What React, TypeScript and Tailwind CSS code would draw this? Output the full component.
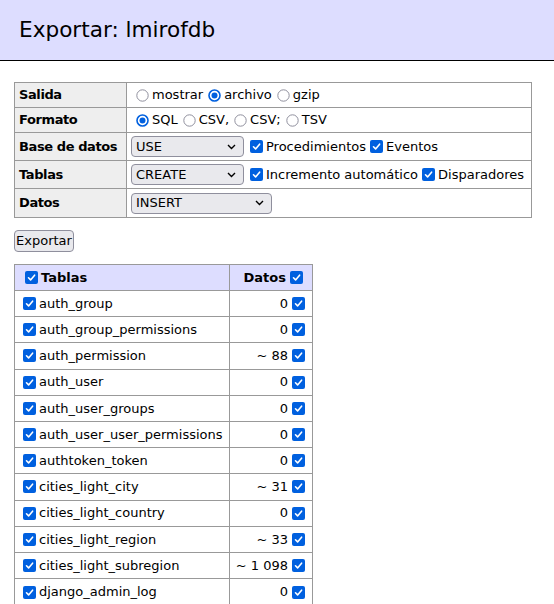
import React from "react";

const FONT = { fontFamily: "'DejaVu Sans', Verdana, sans-serif" };

function Radio({ checked }: { checked?: boolean }) {
  return (
    <svg
      width="13"
      height="13"
      viewBox="0 0 13 13"
      className="ml-[5px] mr-[3px] shrink-0"
      aria-hidden="true"
    >
      {checked ? (
        <>
          <circle cx="6.5" cy="6.5" r="5.5" fill="#fff" stroke="#0060df" strokeWidth="1.6" />
          <circle cx="6.5" cy="6.5" r="3" fill="#0060df" />
        </>
      ) : (
        <circle cx="6.5" cy="6.5" r="5.7" fill="#fff" stroke="#8f8f9d" strokeWidth="1" />
      )}
    </svg>
  );
}

function Check() {
  return (
    <span className="ml-[4px] mr-[3px] inline-flex size-[13px] shrink-0 items-center justify-center rounded-[2px] bg-[#0060df]">
      <svg width="9" height="9" viewBox="0 0 9 9" aria-hidden="true">
        <path d="M1.5 4.8 L3.6 6.9 L7.6 2.2" fill="none" stroke="#fff" strokeWidth="1.6" strokeLinecap="round" strokeLinejoin="round" />
      </svg>
    </span>
  );
}

function Select({ value, width }: { value: string; width: string }) {
  return (
    <span
      className={`inline-flex h-[21px] items-center justify-between rounded-[4px] border border-[#8f8f9d] bg-[#e9e9ed] pl-[4px] pr-[7px] text-[13px] ${width}`}
    >
      <span>{value}</span>
      <svg width="9" height="6" viewBox="0 0 9 6" aria-hidden="true">
        <path d="M1 1 L4.5 4.5 L8 1" fill="none" stroke="#000" strokeWidth="1.4" />
      </svg>
    </span>
  );
}

function OptRow({
  label,
  h,
  last,
  children,
}: {
  label: string;
  h: string;
  last?: boolean;
  children: React.ReactNode;
}) {
  return (
    <div className={`flex ${h} ${last ? "" : "border-b border-[#999]"}`}>
      <div className="flex w-[111px] shrink-0 items-center bg-[#eee] px-[4px] font-bold whitespace-nowrap tracking-[-0.4px]">
        {label}
      </div>
      <div className="flex flex-1 items-center border-l border-[#999] px-[4px] whitespace-nowrap">
        {children}
      </div>
    </div>
  );
}

const TABLES: [string, string][] = [
  ["auth_group", "0"],
  ["auth_group_permissions", "0"],
  ["auth_permission", "~ 88"],
  ["auth_user", "0"],
  ["auth_user_groups", "0"],
  ["auth_user_user_permissions", "0"],
  ["authtoken_token", "0"],
  ["cities_light_city", "~ 31"],
  ["cities_light_country", "0"],
  ["cities_light_region", "~ 33"],
  ["cities_light_subregion", "~ 1 098"],
  ["django_admin_log", "0"],
];

export default function App() {
  return (
    <div className="min-h-[604px] w-[554px] overflow-hidden bg-white text-black" style={FONT}>
      <h2 className="h-[61px] border-b border-black bg-[#ddf] pl-[19px] text-[21.6px] leading-[60px] font-normal">
        Exportar: lmirofdb
      </h2>

      <div className="ml-[14px] mt-[21px] text-[13px]">
        <div className="w-[518px] border border-[#999]">
          <OptRow label="Salida" h="h-[25px]">
            <Radio />mostrar<Radio checked />archivo<Radio />gzip
          </OptRow>
          <OptRow label="Formato" h="h-[25px]">
            <Radio checked />SQL<Radio />CSV,<Radio />CSV;<Radio />TSV
          </OptRow>
          <OptRow label="Base de datos" h="h-[28px]">
            <Select value="USE" width="w-[113px]" />
            <span className="ml-[2px]" />
            <Check />Procedimientos<Check />Eventos
          </OptRow>
          <OptRow label="Tablas" h="h-[28px]">
            <Select value="CREATE" width="w-[113px]" />
            <span className="ml-[2px]" />
            <Check />Incremento automático<Check />Disparadores
          </OptRow>
          <OptRow label="Datos" h="h-[28px]" last>
            <Select value="INSERT" width="w-[141px]" />
          </OptRow>
        </div>

        <button className="mt-[12px] h-[22px] w-[60px] rounded-[4px] border border-[#8f8f9d] bg-[#e9e9ed] text-[13px]">
          Exportar
        </button>

        <div className="mt-[12px] w-[299px] border border-[#999]">
          <div className="flex h-[26px] border-b border-[#999] bg-[#ddf] font-bold">
            <div className="flex w-[214px] items-center px-[6px]">
              <Check />Tablas
            </div>
            <div className="flex flex-1 items-center justify-end border-l border-[#999] px-[6px]">
              Datos<Check />
            </div>
          </div>
          {TABLES.map(([name, rows], idx) => (
            <div
              key={`t-${idx}`}
              className={`flex h-[26.2px] ${idx < TABLES.length - 1 ? "border-b border-[#999]" : ""}`}
            >
              <div className="flex w-[214px] items-center px-[4px] whitespace-nowrap">
                <Check />
                {name}
              </div>
              <div className="flex flex-1 items-center justify-end border-l border-[#999] px-[4px] whitespace-nowrap">
                {rows}
                <Check />
              </div>
            </div>
          ))}
        </div>
      </div>
    </div>
  );
}
